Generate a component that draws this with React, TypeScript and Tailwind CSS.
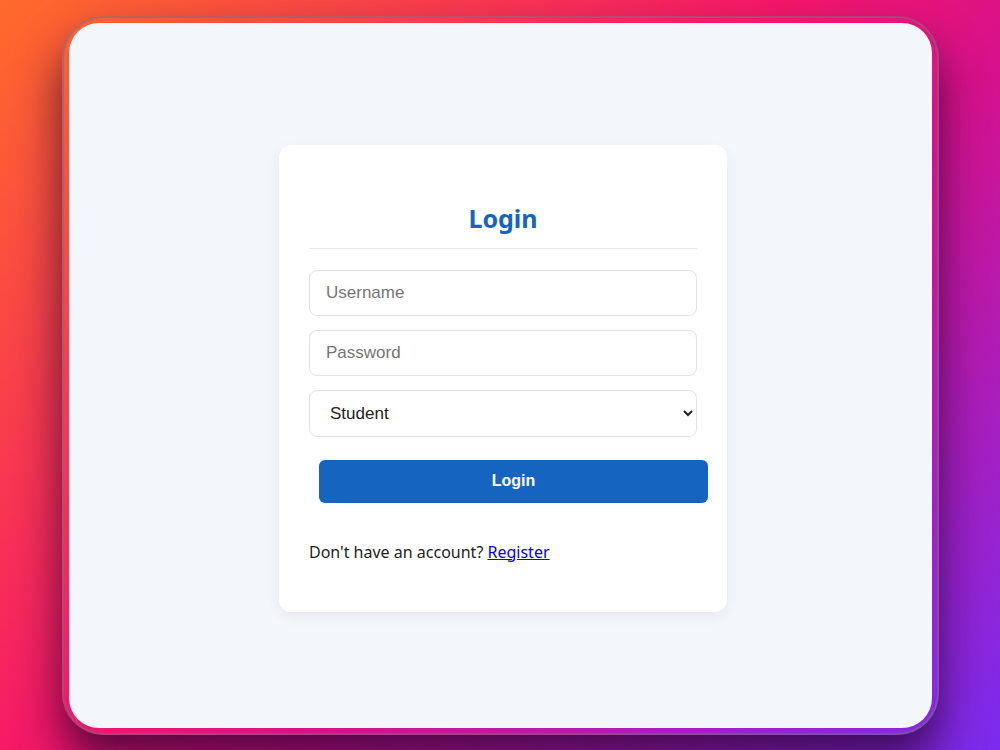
import { useState } from "react"

export default function App() {
    const [role, setRole] = useState("student")

    return (
        <div className="w-[1000px] h-[750px] bg-[linear-gradient(135deg,#ff6a2b_0%,#f5176a_45%,#d8118a_60%,#7a2cf0_100%)] flex items-center justify-center overflow-hidden">
            <div className="w-[877px] h-[719px] p-[5px] rounded-[42px] border-2 border-[rgba(120,110,130,0.55)] shadow-[0_28px_45px_rgba(30,0,40,0.7)]">
                <div className="w-full h-full bg-[#f3f6fa] rounded-[30px] flex items-center justify-center pt-[6px] pl-[6px]">
                    <div className="w-[448px] bg-white rounded-[12px] shadow-[0_4px_14px_rgba(0,0,0,0.06)] px-[30px] pt-[55px] pb-[48px] font-['Noto_Sans',sans-serif]">
                        <h2 className="text-[25px] leading-[36px] font-bold text-[#1565c0] text-center pb-[12px] border-b border-[#e6e8ec]">
                            Login
                        </h2>

                        <form className="mt-[21px] flex flex-col gap-[14px] font-['Liberation_Sans',Arial,sans-serif]" onSubmit={(e) => e.preventDefault()}>
                            <input
                                type="text"
                                placeholder="Username"
                                className="h-[46px] w-full px-[16px] text-[17px] text-[#222] placeholder:text-[#757575] border border-[#e3e3e3] rounded-[8px] outline-none"
                            />
                            <input
                                type="password"
                                placeholder="Password"
                                className="h-[46px] w-full px-[16px] text-[17px] text-[#222] placeholder:text-[#757575] border border-[#e3e3e3] rounded-[8px] outline-none"
                            />
                            <select
                                value={role}
                                onChange={(e) => setRole(e.target.value)}
                                className="h-[47px] w-full pl-[16px] pr-[6px] text-[17px] text-[#222] bg-white border border-[#e3e3e3] rounded-[8px] outline-none"
                            >
                                <option value="student">Student</option>
                                <option value="teacher">Teacher</option>
                                <option value="admin">Admin</option>
                            </select>
                            <button
                                type="submit"
                                className="mt-[9px] ml-[10px] w-[389px] h-[43px] bg-[#1565c0] text-white text-[16px] font-bold rounded-[6px]"
                            >
                                Login
                            </button>
                        </form>

                        <p className="mt-[37px] text-[16px] leading-[24px] text-[#222]">
                            Don't have an account?{" "}
                            <a href="#" className="text-[#0000ee] underline">Register</a>
                        </p>
                    </div>
                </div>
            </div>
        </div>
    )
}
